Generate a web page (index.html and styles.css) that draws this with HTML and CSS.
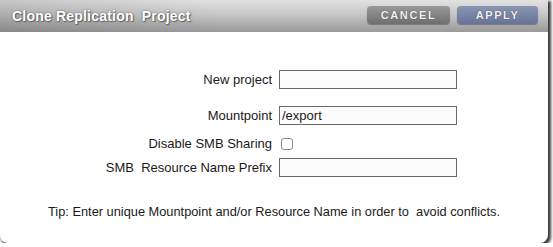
FILE: index.html
```html
<!DOCTYPE html>
<html lang="en">
<head>
  <meta charset="UTF-8" />
  <title>Clone Replication Project</title>
  <link rel="stylesheet" href="styles.css">
</head>
<body>
  <div class="dialog">
    <div class="dialog-header">
      <span class="dialog-title">Clone Replication&nbsp; Project</span>
      <div class="dialog-buttons">
        <button class="btn btn-cancel">CANCEL</button>
        <button class="btn btn-apply">APPLY</button>
      </div>
    </div>

    <div class="dialog-body">
      <div class="row row-first">
        <label for="new-project">New project</label>
        <input id="new-project" type="text" />
      </div>
      <div class="row row-mount">
        <label for="mountpoint">Mountpoint</label>
        <input id="mountpoint" type="text" value="/export" />
      </div>
      <div class="row row-check">
        <label for="disable-smb">Disable SMB Sharing</label>
        <input id="disable-smb" type="checkbox" />
      </div>
      <div class="row row-prefix">
        <label for="smb-prefix">SMB&nbsp; Resource Name Prefix</label>
        <input id="smb-prefix" type="text" />
      </div>

      <p class="tip">Tip: Enter unique Mountpoint and/or Resource Name in order to&nbsp; avoid conflicts.</p>
    </div>
  </div>
</body>
</html>
```

FILE: styles.css
```css
body {
  margin: 0;
  background: #ffffff;
  font-family: "Liberation Sans", Arial, sans-serif;
  color: #1a1a1a;
}
.dialog {
  width: 548px;
  height: 243px;
  background: #ffffff;
  border-radius: 0 0 8px 8px;
  box-shadow: 2px 2px 3px 1px #3a3a3a;
  overflow: hidden;
}
.dialog-header {
  height: 32px;
  display: flex;
  align-items: center;
  justify-content: space-between;
  padding: 0 10px 0 12px;
  background:
    linear-gradient(to right, rgba(0,0,0,0.12), rgba(0,0,0,0) 40%),
    linear-gradient(#e2e2e2, #c6c6c6 45%, #9a9a9a);
}
.dialog-title {
  color: #ffffff;
  font-size: 14px;
  font-weight: bold;
  letter-spacing: 0.2px;
  text-shadow: 0 0 2px #555, 1px 1px 1px #666;
}
.dialog-buttons {
  display: flex;
  gap: 7px;
  margin-top: -2px;
}
.btn {
  height: 18px;
  padding: 0;
  border: none;
  border-radius: 4px;
  font-family: "Liberation Sans", Arial, sans-serif;
  font-size: 11px;
  font-weight: bold;
  letter-spacing: 1.6px;
  color: #f2f2f2;
  text-shadow: 0 0 1px #333;
  cursor: pointer;
}
.btn-cancel {
  width: 83px;
  background: linear-gradient(#9a9a9a, #6e6e6e);
  box-shadow: 0 1px 1px #777;
}
.btn-apply {
  width: 81px;
  background: linear-gradient(#8b96b3, #67729a);
  box-shadow: 0 1px 1px #777;
}
.dialog-body {
  padding-top: 38px;
}
.row {
  display: grid;
  grid-template-columns: 272px 178px;
  column-gap: 7px;
  align-items: center;
  font-size: 13px;
}
.row label {
  text-align: right;
}
.row-mount { margin-top: 17px; }
.row-check {
  height: 12px;
  margin-top: 13px;
  line-height: 12px;
}
.row-prefix { margin-top: 8px; }
input[type="text"] {
  box-sizing: border-box;
  width: 178px;
  height: 19px;
  margin: 0;
  padding: 0 2px;
  border: 1px solid #6a6a6a;
  background: #fcfcfc;
  font-family: "Liberation Sans", Arial, sans-serif;
  font-size: 13px;
  color: #1a1a1a;
  outline: none;
}
input[type="checkbox"] {
  appearance: none;
  width: 12px;
  height: 12px;
  margin: 0 0 0 2px;
  border: 1px solid #8a8a8a;
  border-radius: 3px;
  background: #ffffff;
}
.tip {
  margin: 27px 0 0;
  text-align: center;
  font-size: 12.8px;
}
```
